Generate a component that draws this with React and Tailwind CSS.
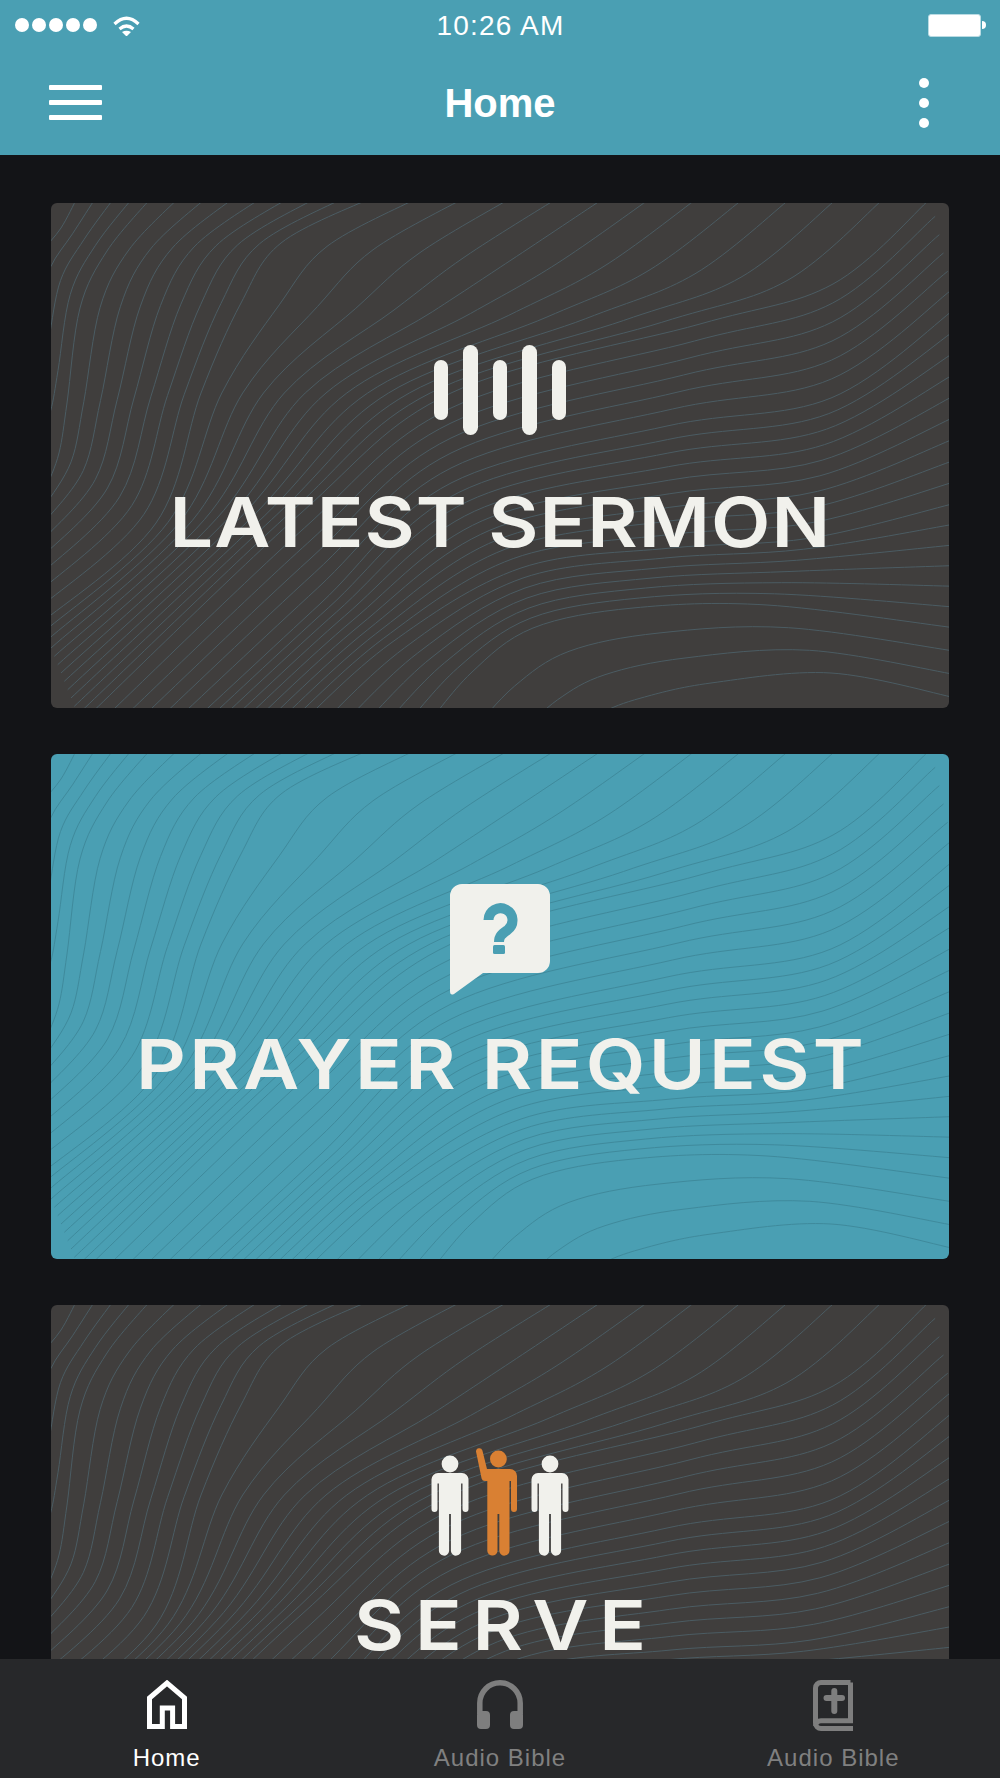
import React from 'react';

// key contours of the wave texture, card coordinates (898 x 505)
// each row: [curve points], how many lines to draw up to the next row
const KEYS = [
  { pts: [[26, -5], [10, 25], [-10, 50], [-20, 70], [-25, 80], [-30, 90]], n: 4 },
  { pts: [[100, -5], [56, 48], [29, 105], [16, 200], [8, 250], [-5, 285]], n: 8 },
  { pts: [[320, -5], [230, 40], [190, 100], [150, 190], [105, 320], [-10, 420]], n: 12 },
  { pts: [[880, -5], [782, 81], [649, 121], [400, 190], [250, 310], [30, 520]], n: 6 },
  { pts: [[905, 105], [780, 195], [616, 223], [400, 280], [270, 400], [130, 530]], n: 9 },
  { pts: [[905, 300], [760, 335], [620, 345], [470, 365], [340, 440], [240, 530]], n: 6 },
  { pts: [[905, 425], [716, 402], [582, 405], [482, 425], [420, 470], [370, 530]], n: 3 },
  { pts: [[905, 495], [780, 470], [660, 480], [590, 495], [550, 510], [520, 530]], n: 1 },
];

const smooth = (p) => {
  let d = `M${p[0][0].toFixed(1)} ${p[0][1].toFixed(1)}`;
  for (let i = 0; i < p.length - 1; i++) {
    const a = p[i - 1] || p[i];
    const b = p[i];
    const c = p[i + 1];
    const e = p[i + 2] || c;
    const c1 = [b[0] + (c[0] - a[0]) / 6, b[1] + (c[1] - a[1]) / 6];
    const c2 = [c[0] - (e[0] - b[0]) / 6, c[1] - (e[1] - b[1]) / 6];
    d += `C${c1[0].toFixed(1)} ${c1[1].toFixed(1)} ${c2[0].toFixed(1)} ${c2[1].toFixed(1)} ${c[0].toFixed(1)} ${c[1].toFixed(1)}`;
  }
  return d;
};

const wavePaths = [];
KEYS.forEach((key, k) => {
  const next = KEYS[k + 1];
  if (!next) {
    wavePaths.push(smooth(key.pts));
    return;
  }
  for (let i = 0; i < key.n; i++) {
    const t = i / key.n;
    wavePaths.push(smooth(key.pts.map((pt, j) => [pt[0] + (next.pts[j][0] - pt[0]) * t, pt[1] + (next.pts[j][1] - pt[1]) * t])));
  }
});

const Waves = ({ color }) => (
  <svg className="absolute inset-0 w-full h-full" viewBox="0 0 898 505" fill="none">
    {wavePaths.map((d, i) => (
      <path key={i} d={d} stroke={color} strokeWidth="1" />
    ))}
  </svg>
);

const Card = ({ bg, line, pad, icon, title, tracking, gap }) => (
  <div className={`relative h-[505px] shrink-0 rounded-[6px] overflow-hidden ${bg}`}>
    <Waves color={line} />
    <div className={`relative flex flex-col items-center ${pad}`}>
      {icon}
      <div className={`font-['Inter',sans-serif] font-semibold text-[69px] leading-[50px] whitespace-nowrap text-[#f1f1ec] scale-x-[1.12] ${tracking} ${gap}`}>
        {title}
      </div>
    </div>
  </div>
);

const BarsIcon = () => (
  <div className="flex items-center gap-[15px] h-[90px]">
    <div className="w-[14px] h-[60px] rounded-full bg-[#f1f1ec]" />
    <div className="w-[15px] h-[90px] rounded-full bg-[#f1f1ec]" />
    <div className="w-[14px] h-[60px] rounded-full bg-[#f1f1ec]" />
    <div className="w-[15px] h-[90px] rounded-full bg-[#f1f1ec]" />
    <div className="w-[14px] h-[60px] rounded-full bg-[#f1f1ec]" />
  </div>
);

const BubbleIcon = () => (
  <svg width="100" height="111" viewBox="0 0 100 111" fill="none">
    <path d="M0 12a12 12 0 0 1 12-12H88a12 12 0 0 1 12 12V77a12 12 0 0 1-12 12H33L4 110Q0 112 0 107Z" fill="#f1f1ec" />
    <path d="M38.5 36A12 12 0 1 1 57.5 46C52 50 49 52 49 58" stroke="#4a9fb3" strokeWidth="10" />
    <rect x="43" y="61" width="12" height="9" rx="1.5" fill="#4a9fb3" />
  </svg>
);

const Person = ({ cx }) => (
  <g fill="#f1f1ec" transform={`translate(${cx} 0)`}>
    <circle cx="0" cy="16" r="8.4" />
    <path d="M-12 25H12a6.5 6.5 0 0 1 6.5 6.5V61a3 3 0 0 1-6 0V35.5h-1.4V102a5 5 0 0 1-10.2 1V66h-1.8v37a5 5 0 0 1-10.2-1V35.5h-1.4V61a3 3 0 0 1-6 0V31.5A6.5 6.5 0 0 1-12 25Z" />
  </g>
);

const PeopleIcon = () => (
  <svg width="140" height="108" viewBox="0 0 140 108">
    <Person cx="20" />
    <Person cx="120" />
    <g fill="#d98033">
      <circle cx="68.4" cy="11" r="8.4" />
      <path d="M46 3.5a3.3 3.3 0 0 1 6.4-1L57 21H80a7 7 0 0 1 7 7V61a3 3 0 0 1-6 0V33h-1.5V102a5 5 0 0 1-10.2 1V66h-1.8v37a5 5 0 0 1-10.2-1V33H55a3.5 3.5 0 0 1-3.4-2.6Z" />
    </g>
  </svg>
);

const HomeIcon = () => (
  <svg width="40" height="49" viewBox="0 0 40 49" fill="none" stroke="#ffffff" strokeWidth="5">
    <path d="M2.5 46.5V18L20 3 37.5 18V46.5H25.6V28H15.3V46.5Z" />
  </svg>
);

const HeadphonesIcon = () => (
  <svg width="46" height="49" viewBox="0 0 46 49" fill="none">
    <path d="M2.8 34V23A20.2 20.2 0 0 1 43.2 23V34" stroke="#7e7e7e" strokeWidth="5.5" />
    <path d="M0 35a4 4 0 0 1 4-4h5a4 4 0 0 1 4 4V45a4 4 0 0 1-4 4H4a4 4 0 0 1-4-4ZM46 35a4 4 0 0 0-4-4h-5a4 4 0 0 0-4 4V45a4 4 0 0 0 4 4h5a4 4 0 0 0 4-4Z" fill="#7e7e7e" />
  </svg>
);

const BibleIcon = () => (
  <svg width="40" height="51" viewBox="0 0 40 51" fill="none" stroke="#7e7e7e" strokeWidth="5">
    <path d="M37.5 2.5H8A5.5 5.5 0 0 0 2.5 8V43A5.5 5.5 0 0 0 8 48.5H40" />
    <path d="M37.5 2.5V40.8H8A5.5 5.5 0 0 0 2.5 46" />
    <path d="M21.3 11V31M13.5 18H29" strokeWidth="6" strokeLinecap="round" />
  </svg>
);

const TabItem = ({ icon, label, active }) => (
  <div className="flex-1 flex flex-col items-center">
    <div className="h-[52px] flex items-start">{icon}</div>
    <span className={`mt-[12px] text-[24px] leading-[28px] tracking-[1px] ${active ? 'text-white' : 'text-[#808080]'}`}>{label}</span>
  </div>
);

const App = () => {
  return (
    <div className="w-[1000px] h-[1778px] flex flex-col overflow-hidden bg-[#131417] font-['Liberation_Sans',sans-serif]">
      {/* Status + nav bar */}
      <header className="h-[155px] shrink-0 bg-[#4a9fb3] text-white">
        <div className="h-[50px] px-[15px] flex items-center">
          <div className="flex-1 flex items-center">
            <div className="flex gap-[3px]">
              {[0, 1, 2, 3, 4].map((i) => (
                <div key={i} className="w-[14px] h-[14px] rounded-full bg-white" />
              ))}
            </div>
            <svg className="ml-[16px]" width="27" height="21" viewBox="0 0 27 21" fill="none" stroke="#ffffff" strokeWidth="3.2">
              <path d="M1.5 9Q13.5 -2.5 25.5 9" />
              <path d="M6.5 14Q13.5 8 20.5 14" />
              <path d="M9 17Q13.5 14.5 18 17L13.5 21.5Z" fill="#ffffff" stroke="none" />
            </svg>
          </div>
          <span className="text-[28px] tracking-[1.2px] leading-none mt-[1px]">10:26 AM</span>
          <div className="flex-1 flex items-center justify-end -mr-[1px]">
            <div className="w-[53px] h-[23px] rounded-[3px] bg-white border border-[#b9dbe3]" />
            <div className="w-[4px] h-[8px] rounded-r-full bg-white ml-[1px]" />
          </div>
        </div>
        <div className="h-[105px] pl-[49px] pr-[71px] flex items-center">
          <div className="flex-1">
            <div className="w-[53px] flex flex-col gap-[10px]">
              <div className="h-[5px] rounded-[1px] bg-white" />
              <div className="h-[5px] rounded-[1px] bg-white" />
              <div className="h-[5px] rounded-[1px] bg-white" />
            </div>
          </div>
          <h1 className="font-bold text-[40px] leading-none ml-[22px]">Home</h1>
          <div className="flex-1 flex justify-end">
            <div className="flex flex-col gap-[10px] w-[10px]">
              <div className="h-[10px] rounded-full bg-white" />
              <div className="h-[10px] rounded-full bg-white" />
              <div className="h-[10px] rounded-full bg-white" />
            </div>
          </div>
        </div>
      </header>

      {/* Cards, the third runs under the tab bar */}
      <main className="flex-1 min-h-0 overflow-hidden px-[51px] pt-[48px] flex flex-col gap-[46px]">
        <Card bg="bg-[#403e3d]" line="#4b5c63" pad="pt-[142px]" icon={<BarsIcon />} title="LATEST SERMON" tracking="tracking-[0.9px] pl-[0.9px]" gap="mt-[62px]" />
        <Card bg="bg-[#4a9fb3]" line="#3f8a9c" pad="pt-[130px]" icon={<BubbleIcon />} title="PRAYER REQUEST" tracking="tracking-[3px] pl-[3px]" gap="mt-[44px]" />
        <Card bg="bg-[#403e3d]" line="#4b5c63" pad="pt-[143px]" icon={<PeopleIcon />} title="SERVE" tracking="tracking-[9.6px] pl-[9.6px]" gap="mt-[44px]" />
      </main>

      {/* Tab bar */}
      <nav className="h-[119px] shrink-0 bg-[#27282a] pt-[21px] flex">
        <TabItem icon={<HomeIcon />} label="Home" active />
        <TabItem icon={<HeadphonesIcon />} label="Audio Bible" />
        <TabItem icon={<BibleIcon />} label="Audio Bible" />
      </nav>
    </div>
  );
};

export default App;
